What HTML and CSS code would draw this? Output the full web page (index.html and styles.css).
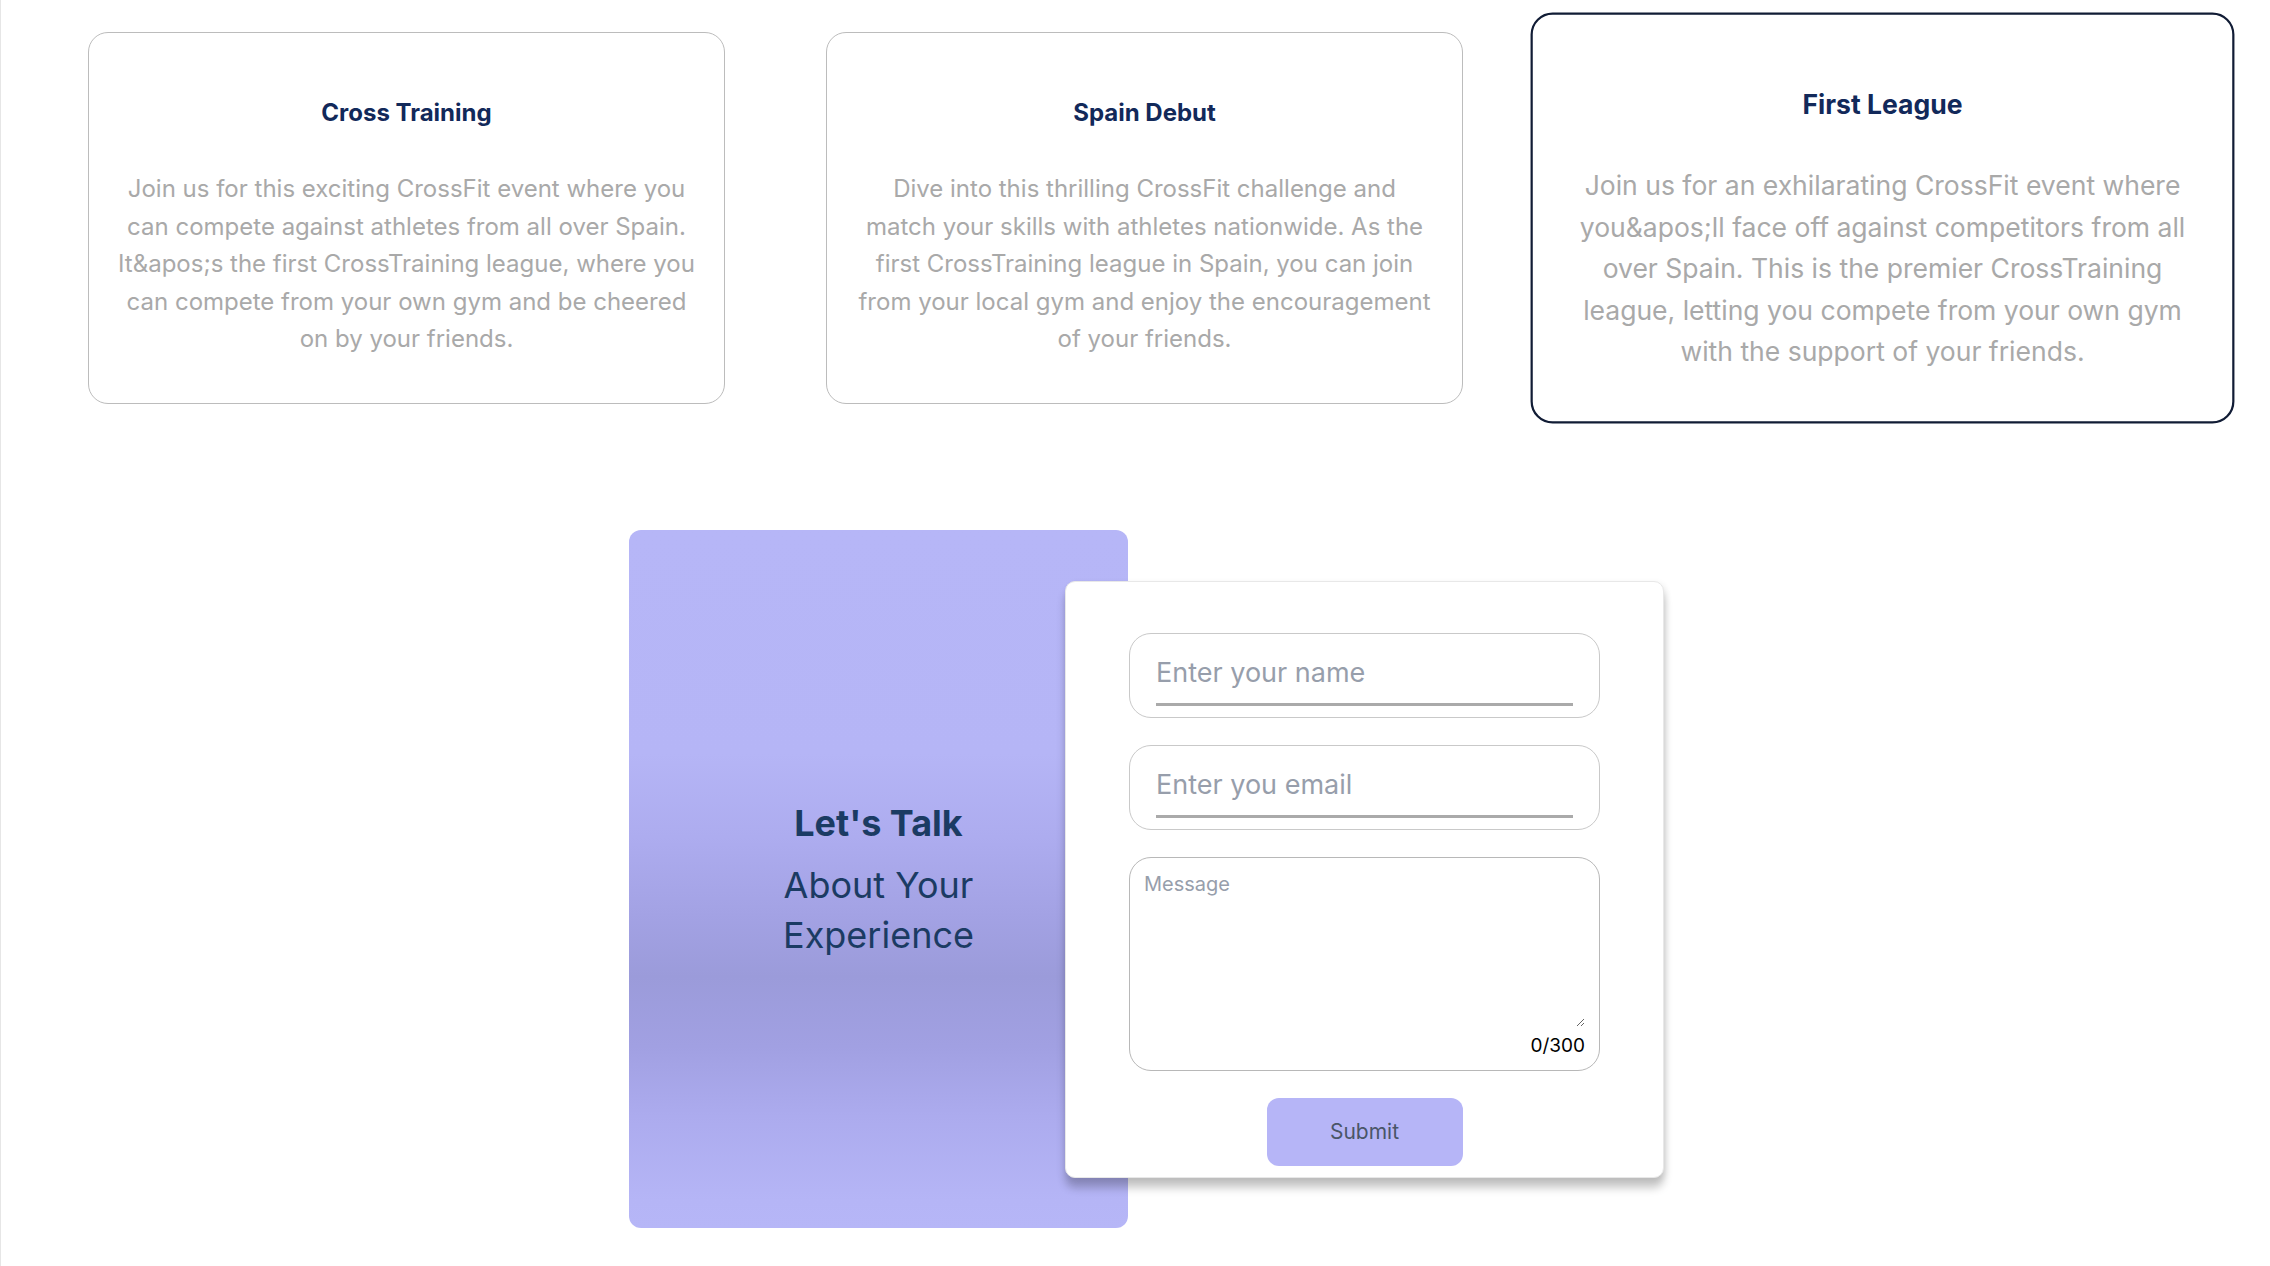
FILE: index.html
```html
<!DOCTYPE html>
<html lang="en">
<head>
<meta charset="utf-8">
<title>CrossTraining League</title>
<link rel="stylesheet" href="styles.css">
</head>
<body>
<div class="page">
  <section class="cards">
    <article class="card">
      <h3 class="card-title">Cross Training</h3>
      <p class="card-text">Join us for this exciting CrossFit event where you can compete against athletes from all over Spain. It&amp;apos;s the first CrossTraining league, where you can compete from your own gym and be cheered on by your friends.</p>
    </article>
    <article class="card">
      <h3 class="card-title">Spain Debut</h3>
      <p class="card-text">Dive into this thrilling CrossFit challenge and match your skills with athletes nationwide. As the first CrossTraining league in Spain, you can join from your local gym and enjoy the encouragement of your friends.</p>
    </article>
    <article class="card card-active">
      <h3 class="card-title">First League</h3>
      <p class="card-text">Join us for an exhilarating CrossFit event where you&amp;apos;ll face off against competitors from all over Spain. This is the premier CrossTraining league, letting you compete from your own gym with the support of your friends.</p>
    </article>
  </section>

  <section class="contact">
    <div class="contact-panel">
      <div class="contact-heading">
        <h2 class="contact-title">Let's Talk</h2>
        <p class="contact-sub">About Your<br>Experience</p>
      </div>
    </div>
    <form class="contact-form">
      <div class="field">
        <input class="field-input" type="text" placeholder="Enter your name">
      </div>
      <div class="field">
        <input class="field-input" type="email" placeholder="Enter you email">
      </div>
      <div class="field-area">
        <textarea class="area-input" placeholder="Message"></textarea>
        <div class="counter">0/300</div>
      </div>
      <button class="submit" type="button">Submit</button>
    </form>
  </section>
</div>
</body>
</html>
```
FILE: styles.css
```css
* { box-sizing: border-box; }

html, body {
  margin: 0;
  padding: 0;
  background: #ffffff;
}

body {
  font-family: "Inter", "Noto Sans", sans-serif;
}

.page {
  min-height: 1266px;
  border-left: 1px solid #e6e6e6;
}

/* ---------- cards ---------- */
.cards {
  display: flex;
  gap: 101px;
  padding: 32px 0 0 87px;
}

.card {
  flex: 0 0 637px;
  height: 372px;
  border: 1px solid #bcbcbc;
  border-radius: 20px;
  padding: 62px 28px 0;
  text-align: center;
  background: #fff;
}

.card-title {
  margin: 0;
  font-size: 24px;
  line-height: 36px;
  font-weight: 700;
  color: #12295a;
}

.card-text {
  margin: 39px 0 0;
  font-size: 24px;
  line-height: 37.5px;
  color: #a9a9a9;
  font-weight: 400;
}

.card-active {
  border: 2px solid #111c35;
  padding-top: 64px;
  padding-left: 27px;
  padding-right: 27px;
  transform: scale(1.105);
}

.card-active .card-text {
  margin-top: 36px;
}

/* ---------- contact ---------- */
.contact {
  display: flex;
  justify-content: center;
  align-items: center;
  margin-top: 126px;
  padding-left: 22px;
}

.contact-panel {
  flex: 0 0 499px;
  height: 698px;
  border-radius: 12px;
  background: linear-gradient(180deg,
    #b6b6f7 0%,
    #b5b5f6 32%,
    #adacef 44%,
    #a3a2e4 55%,
    #9b9bda 64%,
    #a1a0e2 74%,
    #acabee 84%,
    #b5b5f6 96%,
    #b6b6f7 100%);
  display: flex;
  align-items: center;
  justify-content: center;
}

.contact-heading {
  text-align: center;
  color: #1b3b63;
  margin-top: 2px;
}

.contact-title {
  margin: 0;
  font-size: 36px;
  line-height: 44px;
  font-weight: 700;
}

.contact-sub {
  margin: 15px 0 0;
  font-size: 36px;
  line-height: 50px;
  font-weight: 400;
}

.contact-form {
  position: relative;
  z-index: 1;
  flex: 0 0 599px;
  height: 597px;
  margin-left: -63px;
  background: #fff;
  border: 1px solid #e8e8e8;
  border-radius: 10px;
  box-shadow: 0 10px 8px rgba(0, 0, 0, 0.22), 2px 2px 6px rgba(0, 0, 0, 0.08);
  padding: 51px 63px 0;
  display: flex;
  flex-direction: column;
  align-items: center;
  gap: 27px;
}

.field {
  width: 471px;
  height: 85px;
  border: 1px solid #c9c9c9;
  border-radius: 22px;
  padding: 9px 26px 0;
}

.field-input {
  display: block;
  width: 100%;
  height: 63px;
  border: none;
  border-bottom: 3px solid #aaaaaa;
  outline: none;
  background: transparent;
  padding: 0;
  font-family: "Inter", "Noto Sans", sans-serif;
  font-size: 27px;
  color: #333;
}

.field-input::placeholder,
.area-input::placeholder {
  color: #979eab;
  opacity: 1;
}

.field-area {
  width: 471px;
  height: 214px;
  border: 1px solid #b8b8b8;
  border-radius: 22px;
  padding: 8px 14px 0 8px;
  display: flex;
  flex-direction: column;
}

.area-input {
  display: block;
  width: 100%;
  height: 161px;
  border: none;
  outline: none;
  background: transparent;
  padding: 6px;
  font-family: "Inter", "Noto Sans", sans-serif;
  font-size: 20px;
  color: #333;
  resize: vertical;
}

.counter {
  margin-top: 7px;
  text-align: right;
  font-size: 19px;
  line-height: 23px;
  color: #000;
}

.submit {
  width: 196px;
  height: 68px;
  border: none;
  border-radius: 12px;
  background: #b6b5f7;
  color: #4a5568;
  font-family: "Inter", "Noto Sans", sans-serif;
  font-size: 21px;
  cursor: pointer;
}
```
